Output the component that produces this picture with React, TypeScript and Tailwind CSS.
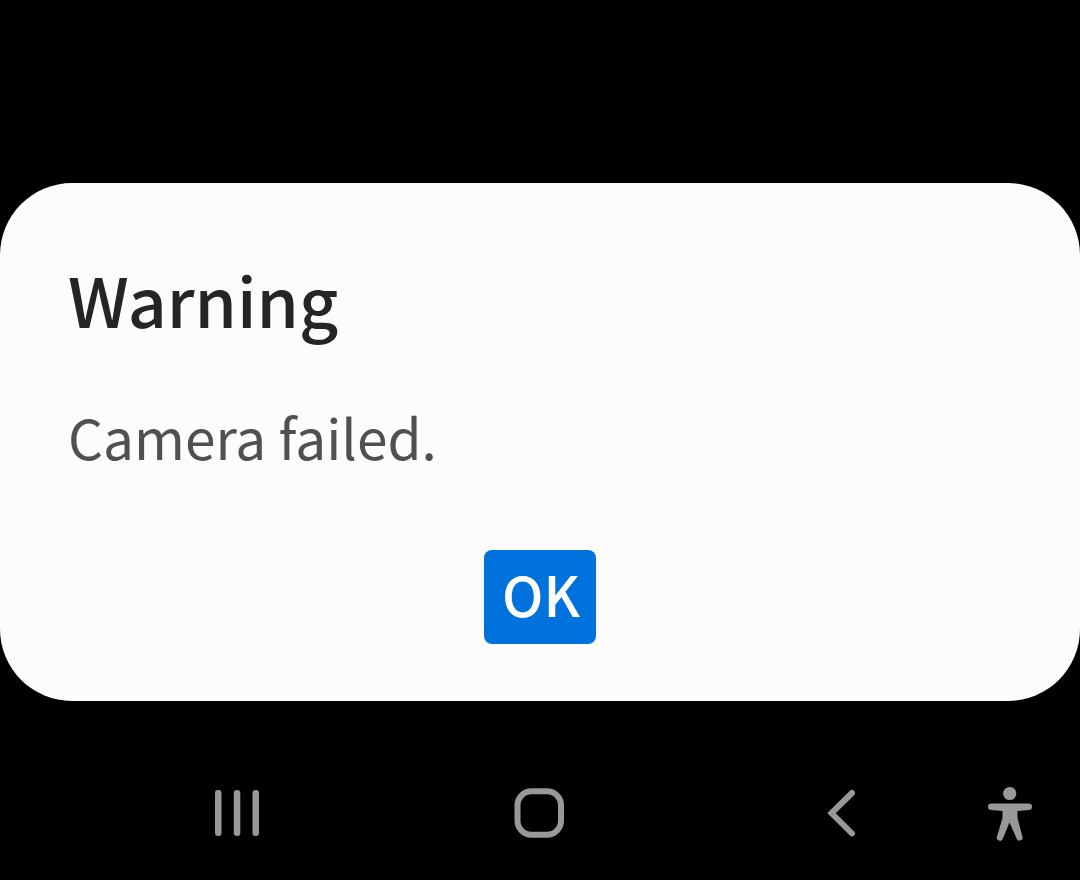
import type { ReactNode } from 'react'

function NavButton({ label, className, children }: { label: string; className: string; children: ReactNode }) {
  return (
    <button type="button" aria-label={label} className={`flex items-center justify-center text-[#989898] ${className}`}>
      {children}
    </button>
  )
}

function NavigationBar() {
  return (
    <nav aria-label="System navigation" className="flex pl-[86px] pr-12 pt-[84px] pb-[39px]">
      <NavButton label="Recent apps" className="flex-1">
        <svg width="56" height="56" viewBox="0 0 56 56" fill="currentColor">
          <rect x="6" y="5" width="6.5" height="46" rx="3" />
          <rect x="24.8" y="5" width="6.5" height="46" rx="3" />
          <rect x="43.5" y="5" width="6.5" height="46" rx="3" />
        </svg>
      </NavButton>
      <NavButton label="Home" className="flex-1">
        <svg width="56" height="56" viewBox="0 0 56 56" fill="none" stroke="currentColor" strokeWidth="6">
          <rect x="6.5" y="6.2" width="43.5" height="43.5" rx="14" />
        </svg>
      </NavButton>
      <NavButton label="Back" className="flex-1">
        <svg width="56" height="56" viewBox="0 0 56 56" fill="none" stroke="currentColor" strokeWidth="6" strokeLinecap="round">
          <path d="M39 8 18.5 28 39 48.5" />
        </svg>
      </NavButton>
      <NavButton label="Accessibility" className="-ml-1 w-11">
        <svg width="44" height="56" viewBox="0 0 44 56" fill="currentColor">
          <circle cx="21.7" cy="8.5" r="6.6" />
          <path d="M3.3 18.5h37.4a3.3 3.3 0 0 1 0 6.6L29.5 26v7l4.8 18.3a3 3 0 0 1-5.6 2.5L21.5 37.5 14.8 53.8a3 3 0 0 1-5.8-2.2L14.5 33v-7L3.3 25.1a3.3 3.3 0 0 1 0-6.6Z" />
        </svg>
      </NavButton>
    </nav>
  )
}

export default function App() {
  return (
    <div className="flex min-h-screen flex-col justify-end bg-black font-['Noto_Sans_CJK_JP','Noto_Sans',sans-serif]">
      <main
        role="alertdialog"
        aria-labelledby="dialog-title"
        aria-describedby="dialog-message"
        className="rounded-[72px] bg-[#fcfcfc] px-[68px] pt-[72px] pb-[57px]"
      >
        <h1 id="dialog-title" className="text-[68px] leading-[88px] font-medium text-[#252525]">
          Warning
        </h1>
        <p id="dialog-message" className="mt-[53px] text-[55px] leading-[80px] text-[#505050]">
          Camera failed.
        </p>
        <div className="mt-[74px] flex justify-center">
          <button
            type="button"
            className="h-[94px] w-28 rounded-lg bg-[#0072de] pb-2 pl-[2px] text-[55px] leading-[80px] font-medium text-white"
          >
            OK
          </button>
        </div>
      </main>
      <NavigationBar />
    </div>
  )
}
